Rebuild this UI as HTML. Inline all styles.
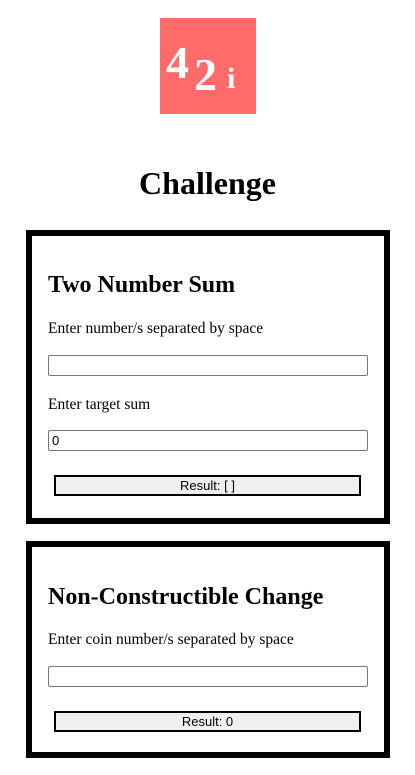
<!DOCTYPE html>
<html><head><style>
body{margin:0;width:415px;height:775px;background:#fff;font-family:"Liberation Serif",serif;position:relative;overflow:hidden}
.a{position:absolute;white-space:nowrap}
.logo{left:160px;top:18px;width:96px;height:96px;background:#ff6b6a}
.box{position:absolute;left:26px;width:352px;border:6px solid #000}
.inp{position:absolute;left:48px;border:1px solid #767676;border-radius:2px;font:13px "Liberation Sans",sans-serif;line-height:19px;padding-left:3px;box-sizing:border-box;width:320px;height:21px}
.btn{position:absolute;left:54px;width:307px;height:21px;box-sizing:border-box;border:2px solid #000;background:#efefef;font:13px "Liberation Sans",sans-serif;text-align:center;line-height:17px}
h2{margin:0;font-size:24px;font-weight:bold}
p{margin:0;font-size:15.5px}
</style></head><body>
<div class="a logo"><svg width="96" height="96"><text x="6" y="60" font-family="Liberation Serif" font-weight="bold" font-size="46" fill="#fff">4</text><text x="34" y="72" font-family="Liberation Serif" font-weight="bold" font-size="46" fill="#fff">2</text><text x="67" y="70" font-family="Liberation Serif" font-weight="bold" font-size="30" fill="#fff">i</text></svg></div>
<div class="a" style="left:0;width:415px;text-align:center;top:165px;font-size:32px;font-weight:bold">Challenge</div>
<div class="box" style="top:230px;height:282px"></div>
<h2 class="a" style="left:48px;top:272px">Two Number Sum</h2>
<p class="a" style="left:48px;top:320px">Enter number/s separated by space</p>
<div class="inp" style="top:355px"></div>
<p class="a" style="left:48px;top:396px">Enter target sum</p>
<div class="inp" style="top:430px">0</div>
<div class="btn" style="top:475px">Result: [ ]</div>
<div class="box" style="top:541px;height:205px"></div>
<h2 class="a" style="left:48px;top:584px">Non-Constructible Change</h2>
<p class="a" style="left:48px;top:631px">Enter coin number/s separated by space</p>
<div class="inp" style="top:666px"></div>
<div class="btn" style="top:711px">Result: 0</div>
</body></html>
